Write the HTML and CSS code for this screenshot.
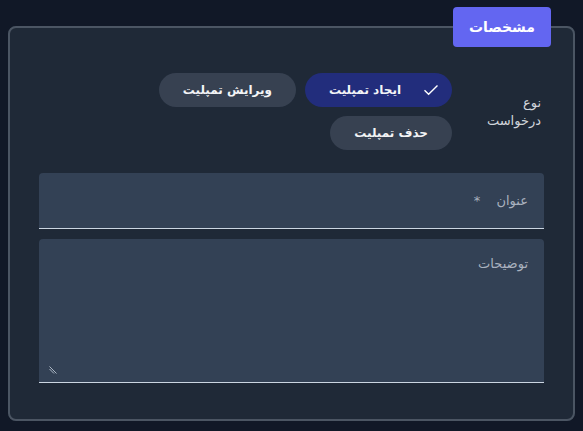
FILE: index.html
```html
<!DOCTYPE html>
<html lang="fa" dir="rtl">
<head>
  <meta charset="UTF-8" />
  <meta name="viewport" content="width=device-width, initial-scale=1.0" />
  <title>مشخصات</title>
  <link rel="stylesheet" href="styles.css">
</head>
<body>
  <fieldset class="panel">
    <legend class="panel-title">مشخصات</legend>
    <div class="panel-body">
      <div class="type-row">
        <div class="type-label">نوع<br>درخواست</div>
        <div class="chips">
          <button class="chip selected">
            <svg class="check" viewBox="0 0 16 12" width="16" height="12"><path d="M1.5 6.2 L5.6 10.2 L14.5 1.5" fill="none" stroke="#fff" stroke-width="1.4"/></svg>
            <span>ایجاد تمپلیت</span>
          </button>
          <button class="chip">ویرایش تمپلیت</button>
          <button class="chip">حذف تمپلیت</button>
        </div>
      </div>

      <div class="field">
        <label class="field-label">عنوان <span class="req">*</span></label>
      </div>

      <div class="field area">
        <label class="field-label">توضیحات</label>
        <svg class="grip" viewBox="0 0 8 8" width="8" height="8"><path d="M0.5 0.5 L7.5 7.5 M0.5 3 L5 7.5" stroke="#cbd5e1" stroke-width="0.8"/></svg>
      </div>
    </div>
  </fieldset>
</body>
</html>
```

FILE: styles.css
```css
* { box-sizing: border-box; }
body {
  margin: 0;
  padding: 7px 8px 0;
  background: #111827;
  color: #e5e7eb;
  font-family: "DejaVu Sans", "Noto Sans", sans-serif;
  height: 431px;
  overflow: hidden;
}
.panel {
  margin: 0;
  height: 414px;
  padding: 0 0 36px;
  border: 2px solid #4b5563;
  border-radius: 8px;
  background: #1f2937;
}
.panel-title {
  margin-right: 22px;
  padding: 0 16px;
  height: 40px;
  line-height: 40px;
  background: #6366f1;
  color: #fff;
  font-weight: bold;
  font-size: 14px;
  border-radius: 4px;
}
.panel-body {
  padding: 26px 29px 0 29px;
}
.type-row {
  display: flex;
  align-items: center;
}
.type-label {
  width: 84px;
  font-size: 13px;
  line-height: 18px;
  color: #d1d5db;
  padding-right: 3px;
}
.chips {
  width: 300px;
  margin-right: 8px;
  display: flex;
  flex-wrap: wrap;
  gap: 9px;
}
.chip {
  height: 34px;
  padding: 0 24px;
  border: none;
  border-radius: 17px;
  background: #374151;
  color: #f3f4f6;
  font-family: inherit;
  font-size: 12px;
  font-weight: bold;
  display: flex;
  align-items: center;
}
.chip.selected {
  background: #222d7c;
  padding-right: 13px;
}
.check {
  margin-left: 22px;
}
.field {
  margin-top: 23px;
  height: 56px;
  background: #334155;
  border-radius: 4px 4px 0 0;
  border-bottom: 1px solid #cbd5e1;
  display: flex;
  align-items: center;
  padding: 0 16px;
}
.field-label {
  font-size: 13px;
  color: #aab2bf;
}
.req {
  margin-right: 12px;
}
.field.area {
  margin-top: 10px;
  height: 144px;
  align-items: flex-start;
  padding-top: 17px;
  position: relative;
}
.grip {
  position: absolute;
  left: 10px;
  bottom: 8px;
}
```
